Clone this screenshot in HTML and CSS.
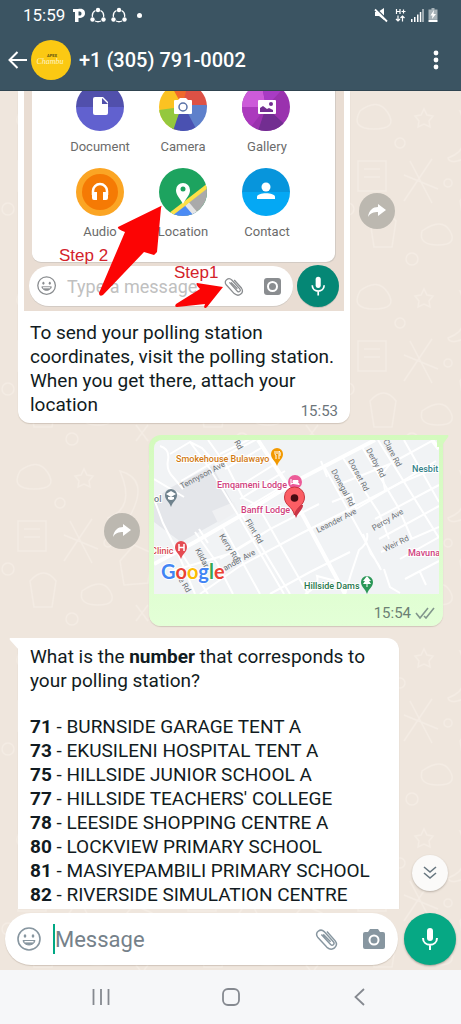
FILE: index.html
```html
<!DOCTYPE html>
<html lang="en">
<head>
    <meta charset="UTF-8">
    <meta name="viewport" content="width=device-width, initial-scale=1.0">
    <title>+1 (305) 791-0002</title>
    <link rel="stylesheet" href="styles.css">
</head>
<body>
    <header class="header">
        <div class="status">
            <span class="clock">15:59</span>
            <svg width="12" height="15" viewBox="0 0 12 15"><path d="M0 1h5c6-1 7 2 7 4.500S10 10 5.500 10v4H2V4H0zM5.500 3.500v4c2.500.5 3-.7 3-2s-.5-2.500-3-2z" fill="#fff" fill-rule="evenodd"/></svg>
            <svg width="16" height="16" viewBox="0 0 16 16"><use href="#share-ring"/></svg>
            <svg width="16" height="16" viewBox="0 0 16 16">
                <g id="share-ring"><path d="M5.500 3.500A6 6 0 0 0 2.500 10M10.500 3.500A6 6 0 0 1 13.500 10M5 14q3 1.500 6 0" fill="none" stroke="#fff" stroke-width="1.300"/><circle cx="8" cy="3" r="2.200" fill="#fff"/><circle cx="2.500" cy="12.500" r="2.200" fill="#fff"/><circle cx="13.500" cy="12.500" r="2.200" fill="#fff"/></g>
            </svg>
            <span class="dot"></span>
            <svg class="status-right" width="64" height="16" viewBox="374 6 64 16" fill="#fff">
                <path d="M375 11h3l6-4v12l-5-4h-4z"/>
                <path d="M376 7.500l12 12" stroke="#3b5462" stroke-width="1.500"/>
                <path d="M375 8.500l12 12" stroke="#fff" stroke-width="1.800"/>
                <path d="M396.500 8v5M400 8v5M396.500 10.500h3.500M401.500 10.500h4M403.500 8.500v4M398 14.500v5.500M396 18l2 2 2-2M402.500 20.500v-5M400.500 17l2-2 2 2" fill="none" stroke="#fff" stroke-width="1.200"/>
                <path d="M411 18h1.500v3H411zM414 16h1.500v5H414zM417 13.500h1.500V21H417zM419.800 11h1.500v10h-1.500zM422.500 8h1v13h-1z"/>
                <path d="M431.500 7h3v1.500h3V18h-9V8.500h3z" opacity=".55"/><path d="M428.500 18.500h9V21h-9z"/>
                <path d="M434 9l-3.500 5.500h2L432 18l4-5h-2.500z"/>
            </svg>
        </div>
        <div class="appbar">
            <button class="icon-btn" aria-label="Back">
                <svg width="20" height="20" viewBox="0 0 20 20"><path d="M19 10H2M9.500 2L1.500 10l8 8" fill="none" stroke="#fff" stroke-width="2"/></svg>
            </button>
            <svg class="avatar" viewBox="0 0 40 40">
                <circle cx="20" cy="20" r="20" fill="#fbc913"/>
                <text x="21" y="17" font-size="4" font-weight="700" text-anchor="middle" fill="#5d5211">APEX</text>
                <text x="19" y="24" font-size="8" font-style="italic" text-anchor="middle" font-family="Liberation Serif, serif" fill="#fff4c9">Chambu</text>
            </svg>
            <h1 class="title">+1 (305) 791-0002</h1>
            <button class="icon-btn more" aria-label="More options">
                <svg width="6" height="20" viewBox="0 0 6 20" fill="#fff"><circle cx="3" cy="3" r="2.400"/><circle cx="3" cy="10" r="2.400"/><circle cx="3" cy="17" r="2.400"/></svg>
            </button>
        </div>
    </header>

    <div class="screen">
        <main class="chat">
            <div class="row">
                <article class="bubble bubble-photo">
                    <svg class="photo" viewBox="24 91 320 220">
                        <defs>
                            <clipPath id="clip-doc"><circle cx="100" cy="107" r="24"/></clipPath>
                            <clipPath id="clip-cam"><circle cx="183" cy="107" r="24"/></clipPath>
                            <clipPath id="clip-gal"><circle cx="266" cy="107" r="24"/></clipPath>
                            <clipPath id="clip-loc"><circle cx="183" cy="192" r="24"/></clipPath>
                            <clipPath id="clip-con"><circle cx="266" cy="192" r="24"/></clipPath>
                        </defs>
                        <rect x="24" y="91" width="320" height="220" fill="#e9ddd3"/>
                        <rect x="32" y="71" width="304" height="192" rx="9" fill="#d3cbc4"/>
                        <rect x="32" y="71" width="303" height="191" rx="9" fill="#fff"/>

                        <g clip-path="url(#clip-doc)"><path d="M76 83h48v24H76z" fill="#5150ac"/><path d="M76 107h48v24H76z" fill="#6161cf"/></g>
                        <path d="M95 97h8l5 5v11q0 2-2 2H95q-2 0-2-2V99q0-2 2-2z" fill="#fff"/><path d="M102 98v6h6z" fill="#5150ac"/>

                        <g clip-path="url(#clip-cam)">
                            <path d="M150 80h33v50h-33z" fill="#fbc222"/>
                            <path d="M183 107L168 80v-10h26z" fill="#f0692c"/><path d="M183 104l8-34h25v37h-33z" fill="#dd5145"/>
                            <path d="M180 105h37v36h-37z" fill="#5e80cb"/><path d="M183 104l18 34h-33z" fill="#4a51b1"/><path d="M181 107l-9 27-20 3v-26z" fill="#94c83e"/>
                        </g>
                        <path d="M175 100h3l2-2h6l2 2h3q1 0 1 1v12q0 1-1 1h-16q-1 0-1-1v-12q0-1 1-1z" fill="#fff"/><circle cx="183" cy="107" r="4" fill="none" stroke="#5972a8" stroke-width="1.500"/>

                        <g clip-path="url(#clip-gal)">
                            <path d="M240 80h52v54h-52z" fill="#9a32ae"/><path d="M240 80h21l5 27h-26z" fill="#cc5bd9"/><path d="M261 80h30l-25 27z" fill="#a83bc4"/><path d="M266 107l26 24h-34z" fill="#722e91"/><path d="M240 107h26l-18 24z" fill="#ab39bd"/>
                        </g>
                        <rect x="258" y="100" width="18" height="14" rx="1" fill="#fff"/><path d="M260 112v-4l3-2 4 3 2-1 4 2v2z" fill="#722e91"/><circle cx="271" cy="104" r="2" fill="#722e91"/>

                        <circle cx="100" cy="192" r="24" fill="#fba524"/><circle cx="100" cy="192" r="18" fill="#f57a04"/>
                        <path d="M93 195v-4a7 7 0 0 1 14 0v4" fill="none" stroke="#fff" stroke-width="2.500"/><path d="M92 192h5v8h-3q-2 0-2-2zM108 192h-5v8h3q2 0 2-2z" fill="#fff"/>

                        <g clip-path="url(#clip-loc)">
                            <path d="M159 168h48v48h-48z" fill="#1da35f"/><path d="M166 219l44-33v33z" fill="#aaa"/><path d="M169 218l19-14 12 14z" fill="#4b8bf4"/><path d="M187 204l12 14" stroke="#e4e4e4" stroke-width="5"/><path d="M166 218l44-34" stroke="#fde047" stroke-width="4"/>
                        </g>
                        <path d="M183 204c-4-7-7-9-7-14a7 7 0 0 1 14 0c0 5-3 7-7 14z" fill="#fff"/><circle cx="183" cy="189" r="2.500" fill="#1da35f"/>

                        <g clip-path="url(#clip-con)"><path d="M242 168h48v24h-48z" fill="#0795dc"/><path d="M242 192h48v24h-48z" fill="#04a8f4"/></g>
                        <circle cx="266" cy="187" r="4.500" fill="#fff"/><path d="M257 199v-2c0-5 18-5 18 0v2z" fill="#fff"/>

                        <g class="photo-label">
                            <text x="100" y="151">Document</text><text x="183" y="151">Camera</text><text x="267" y="151">Gallery</text>
                            <text x="100" y="236">Audio</text><text x="183" y="236">Location</text><text x="267" y="236">Contact</text>
                        </g>

                        <rect x="29" y="267" width="264" height="40" rx="20" fill="#d3cbc4"/><rect x="29" y="266" width="264" height="40" rx="20" fill="#fff"/>
                        <g transform="translate(37 276)"><use href="#smiley" fill="#8a8d90" stroke="#8a8d90" transform="scale(.8)"/></g>
                        <text x="67" y="293" font-size="18" fill="#c0c0c0">Type a message</text>
                        <g transform="translate(223 276)"><use href="#clip" fill="none" stroke="#8a8d90" transform="scale(.8)"/></g>
                        <rect x="264" y="278" width="17" height="17" rx="3" fill="#8a8d90"/><circle cx="272.500" cy="286.500" r="4.500" fill="none" stroke="#fff" stroke-width="2"/>
                        <circle cx="318" cy="287" r="21" fill="#c8c0ba"/><circle cx="318" cy="286" r="21" fill="#058775"/>
                        <g transform="translate(308 276)"><use href="#mic" transform="scale(.85)"/></g>

                        <path d="M161 206l-43 21q-1 2 7 5l-26 61q0 4 4 2l41-43 10 3 3-3 4-44q1-3 0-2z" fill="#fc0404"/>
                        <path d="M223 287l-26-4q-2 1 3 6l-24 15q-2 3 1 3l28-3-1 3q1 2 3 0z" fill="#fc0404"/>
                        <g class="photo-step"><text x="59" y="261">Step 2</text><text x="174" y="278">Step1</text></g>
                    </svg>
                    <p class="text caption">To send your polling station coordinates, visit the polling station. When you get there, attach your location <time class="time">15:53</time></p>
                </article>
                <button class="forward forward-top" aria-label="Forward">
                    <svg width="20" height="16" viewBox="0 0 20 16"><path id="forward" d="M1 14C2 7 6 4 11 4V1l8 6-8 6v-4C7 9 3 10 1 14z" fill="#fff"/></svg>
                </button>
            </div>

            <div class="row row-out">
                <button class="forward" aria-label="Forward">
                    <svg width="20" height="16" viewBox="0 0 20 16"><use href="#forward"/></svg>
                </button>
                <article class="bubble bubble-out">
                    <svg class="map" viewBox="154 441 285 154">
                        <rect x="154" y="441" width="285" height="154" fill="#f1f3f5"/>
                        <path d="M168 490l44-23 25 45-56 31-27-20v-22z" fill="#e4e6ea"/>
                        <path d="M212 512l22-9 4 9-20 12z" fill="#eff0f2"/>
                        <g class="street">
                            <path d="M160 447q10 3 8 14-2 10 5 17l10 12M154 480l30 18M170 455l20-12 20 27 28 46 46 79M154 500l9 24 14 28 18 43"/>
                            <path d="M181 482l36-21 40-21M190 443l12 6 18 20M208 441l20 28 15 30 16 8M220 455l30-15M225 470l38-22M235 490l40-25M240 500l45-28M248 508l40-24"/>
                            <path d="M195 533l22 31 16 31M222 526l38 69M242 516l48 79M258 507l50 88M178 549l30 46M199 530l9 14M172 572l60-18 40-25 47-24M200 595l40-28 60-32 50-25 50-26 39-16M270 595l40-22 40-20M220 560l50-30"/>
                            <path d="M325 469l56 102M343 459l36 55 10 26M362 448l36 60 14 32M378 441l61 98M404 441l35 62M321 462l6 16M340 485l50-20 49-27M356 510l80-48M375 520l64-34M381 571q-2-6-10-16l-8-20M381 553l58-25M379 540l60-33M400 560l39-22"/>
                            <path d="M367 534q2 10-8 17-4 12-8 24l-6 20M384 570l6 18 10 6M405 580l34-18M420 573l6 13M305 595q15-8 12-18l30 8M356 510l-4-15-20 8M390 465l-8 10 3 16"/>
                        </g>
                        <g class="road"><path d="M154 565l41-22 45-26 60-37 75-39"/><path d="M258 441l30 46 12 24 45 84M432 441l7 9"/></g>
                        <g class="map-street-name">
                            <text transform="translate(182 490) rotate(-28)">Tennyson Ave</text>
                            <text transform="translate(231 438) rotate(60)">y Rd</text>
                            <text transform="translate(245 522) rotate(60)">Flint Rd</text>
                            <text transform="translate(219 537) rotate(58)">Kerry Rd</text>
                            <text transform="translate(195 551) rotate(62)">Kildare</text>
                            <text transform="translate(225 572) rotate(-29)">ander Ave</text>
                            <text transform="translate(318 534) rotate(-27)">Leander Ave</text>
                            <text transform="translate(374 532) rotate(-31)">Percy Ave</text>
                            <text transform="translate(385 553) rotate(-26)">Weir Rd</text>
                            <text transform="translate(331 472) rotate(62)">Donegal Rd</text>
                            <text transform="translate(348 462) rotate(62)">Dorset Rd</text>
                            <text transform="translate(366 451) rotate(62)">Derby Rd</text>
                            <text transform="translate(383 442) rotate(62)">Clare Rd</text>
                            <text transform="translate(176 577) rotate(58)">ue Rd</text>
                        </g>
                        <g class="map-place">
                            <text x="176" y="463" fill="#d17a13">Smokehouse Bulawayo</text>
                            <text x="217" y="489" fill="#d0407d">Emqameni Lodge</text>
                            <text x="241" y="514" fill="#d0407d">Banff Lodge</text>
                            <text x="412" y="473" fill="#337f88">Nesbit</text>
                            <text x="408" y="557" fill="#d0407d">Mavuna</text>
                            <text x="304" y="590" fill="#26774b">Hillside Dams</text>
                            <text x="151" y="555" fill="#d84a50">Clinic</text>
                            <text x="149" y="503" fill="#71808a">ool</text>
                        </g>
                        <g fill="#f29900"><path id="pin" d="M277 467c-2-6-6-7-6-12a6 6 0 0 1 12 0c0 5-4 6-6 12z"/></g>
                        <path d="M275 452v3q0 1 1 1v4M277 452v3M279 460v-8q2 1 1 5" fill="none" stroke="#fff"/>
                        <use href="#pin" x="-106" y="41" fill="#6f828d"/><path d="M166 495l5-3 5 3-5 3zM168 498v2q3 2 6 0v-2z" fill="#fff"/>
                        <use href="#pin" x="-96" y="93" fill="#e54b52"/><path d="M179 545v7M184 545v7M179 548.500h5" stroke="#fff" stroke-width="1.500"/>
                        <use href="#pin" x="90" y="128" fill="#2b9757"/><path d="M367 577l4 5h-2l2 3h-8l2-3h-2zM366.500 585h1v3h-1z" fill="#fff"/>
                        <circle cx="295" cy="483" r="7" fill="#ec5b98"/><path d="M291 480v6M291 484.500h8v1.500M293 481.500h5v2h-5z" fill="#fff" stroke="#fff"/>
                        <path d="M296 519c-2-7-5-8-5-13h12c0 5-5 7-7 13z" fill="#c93447"/>
                        <path d="M294.500 516c-2-9-10-9-10-18a10 10 0 0 1 20 0c0 9-8 9-10 18z" fill="#fb5e64" stroke="#c73540"/><circle cx="294.500" cy="499" r="3.800" fill="#470c12"/>
                        <text class="google" x="161" y="580"><tspan fill="#4285f4">G</tspan><tspan fill="#ea4335">o</tspan><tspan fill="#fbbc05">o</tspan><tspan fill="#4285f4">g</tspan><tspan fill="#34a853">l</tspan><tspan fill="#ea4335">e</tspan></text>
                    </svg>
                    <div class="meta">
                        <time>15:54</time>
                        <svg width="20" height="12" viewBox="0 0 20 12"><path d="M1 6l4 5 8-10M9 9l2 2 8-10" fill="none" stroke="#82968c" stroke-width="1.600"/></svg>
                    </div>
                    <svg class="tail tail-right" width="12" height="12" viewBox="0 0 12 12"><path d="M0 0h11q1 1 0 2L6 9v3H0z" fill="#d3fabd"/></svg>
                </article>
            </div>

            <div class="row row-last">
                <article class="bubble bubble-list">
                    <svg class="tail tail-left" width="10" height="12" viewBox="0 0 10 12"><path d="M10 0H1Q0 1 1 2l9 10z" fill="#fff"/></svg>
                    <p class="text">What is the <b>number</b> that corresponds to your polling station?</p>
                    <ul class="text stations">
                        <li><b>71</b> - BURNSIDE GARAGE TENT A</li>
                        <li><b>73</b> - EKUSILENI HOSPITAL TENT A</li>
                        <li><b>75</b> - HILLSIDE JUNIOR SCHOOL A</li>
                        <li><b>77</b> - HILLSIDE TEACHERS' COLLEGE</li>
                        <li><b>78</b> - LEESIDE SHOPPING CENTRE A</li>
                        <li><b>80</b> - LOCKVIEW PRIMARY SCHOOL</li>
                        <li><b>81</b> - MASIYEPAMBILI PRIMARY SCHOOL</li>
                        <li><b>82</b> - RIVERSIDE SIMULATION CENTRE</li>
                    </ul>
                </article>
            </div>
            <button class="scroll-down" aria-label="Scroll to bottom">
                <svg width="14" height="14" viewBox="0 0 14 14"><path d="M1 1l6 5 6-5M1 7l6 5 6-5" fill="none" stroke="#687780" stroke-width="1.600"/></svg>
            </button>
        </main>

        <form class="composer">
            <div class="field">
                <button type="button" class="icon-btn" aria-label="Emoji">
                    <svg width="24" height="24" viewBox="0 0 24 24" fill="#8796a0" stroke="#8796a0">
                        <g id="smiley"><circle cx="12" cy="12" r="11" fill="none" stroke-width="1.600"/><ellipse cx="8" cy="9" rx="1.300" ry="1.800" stroke="none"/><ellipse cx="16" cy="9" rx="1.300" ry="1.800" stroke="none"/><path d="M6 13.500h12c-1 6-11 6-12 0z" stroke-width="1"/><path d="M7.500 14.700h9" stroke="#fff" stroke-width="1.400"/></g>
                    </svg>
                </button>
                <span class="caret"></span>
                <input class="message" type="text" placeholder="Message" aria-label="Message">
                <button type="button" class="icon-btn" aria-label="Attach">
                    <svg width="24" height="24" viewBox="0 0 26 26" fill="none" stroke="#8796a0">
                        <path id="clip" d="M8 8l10 11c2 2 5-.5 3-3L11 5C7 1 0 6 4 11l10 11c6 5 13-1 9-7l-9-10M18 16l-8-8" stroke-width="1.600"/>
                    </svg>
                </button>
                <button type="button" class="icon-btn camera" aria-label="Camera">
                    <svg width="24" height="22" viewBox="0 0 24 22"><path d="M8 1h8l2 3h3q2 0 2 2v13q0 2-2 2H3q-2 0-2-2V6q0-2 2-2h3z" fill="#8796a0"/><circle cx="12" cy="12" r="4.500" fill="none" stroke="#fff" stroke-width="2"/></svg>
                </button>
            </div>
            <button type="button" class="mic" aria-label="Voice message">
                <svg width="24" height="24" viewBox="0 0 24 24">
                    <g id="mic"><rect x="9" y="1" width="6" height="13" rx="3" fill="#fff"/><path d="M5 11c0 9 14 9 14 0M12 18v5" fill="none" stroke="#fff" stroke-width="2"/></g>
                </svg>
            </button>
        </form>
    </div>

    <nav class="navbar">
        <button class="icon-btn" aria-label="Recents"><svg width="18" height="18" viewBox="0 0 18 18"><path d="M1.500 1v16M9 1v16M16.500 1v16" stroke="#858990" stroke-width="1.800"/></svg></button>
        <button class="icon-btn" aria-label="Home"><svg width="18" height="18" viewBox="0 0 18 18"><rect x="1" y="1" width="16" height="16" rx="5" fill="none" stroke="#858990" stroke-width="1.800"/></svg></button>
        <button class="icon-btn" aria-label="Back"><svg width="18" height="18" viewBox="0 0 18 18"><path d="M13 1L4.500 9l8.500 8" fill="none" stroke="#858990" stroke-width="1.800"/></svg></button>
    </nav>
</body>
</html>
```
FILE: styles.css
```css
* {
    box-sizing: border-box;
}
body {
    margin: 0;
    height: 100vh;
    display: flex;
    flex-direction: column;
    font-family: Roboto, "Liberation Sans", sans-serif;
    color: #111b21;
    overflow: hidden;
}
button {
    border: none;
    padding: 0;
    background: none;
    cursor: pointer;
}
svg {
    display: block;
    flex-shrink: 0;
}
.icon-btn {
    display: flex;
    align-items: center;
    justify-content: center;
}

/* header */
.header {
    background: #3b5462;
    color: #fff;
    border-bottom: 1px solid #2f4450;
}
.status {
    display: flex;
    align-items: center;
    height: 30px;
    padding: 0 23px;
    gap: 5px;
}
.clock {
    font-size: 17px;
    margin-right: 3px;
}
.dot {
    width: 5px;
    height: 5px;
    border-radius: 50%;
    background: #fff;
    margin-left: 5px;
}
.status-right {
    margin-left: auto;
}
.appbar {
    display: flex;
    align-items: center;
    height: 60px;
    padding: 0 22px 0 8px;
}
.avatar {
    width: 40px;
    height: 40px;
    margin: 0 8px 0 3px;
}
.title {
    flex: 1;
    margin: 0;
    font-size: 20px;
    font-weight: 500;
}

/* chat */
.screen {
    flex: 1;
    min-height: 0;
    display: flex;
    flex-direction: column;
    background: #efe6dd url("data:image/svg+xml,%3Csvg xmlns='http://www.w3.org/2000/svg' width='170' height='180' fill='none' stroke='%23f4ece4' stroke-width='1.500'%3E%3Cpath d='M20 20q18-14 28 2t-14 16-14-18zM84 18l3 6 6 1-4 5 1 6-6-3-6 3 1-6-4-5 6-1zM120 20q30 8 10 45-20 10-22 2 28-10 12-47zM18 70h28v30H18zM24 78h16M24 86h16M70 70l22 42M92 68l-28 42M64 84l34 14M120 110l14-16 18 8-4 30-24 2zM30 130q14-16 26 0l-4 26H34zM82 140q20-14 28 0t-12 14-16-14zM136 154l12 16M148 154l-12 16'/%3E%3Ccircle cx='60' cy='52' r='5'/%3E%3Ccircle cx='156' cy='16' r='7'/%3E%3Ccircle cx='8' cy='118' r='6'/%3E%3Ccircle cx='108' cy='92' r='4'/%3E%3Ccircle cx='72' cy='168' r='6'/%3E%3Ccircle cx='154' cy='78' r='4'/%3E%3C/svg%3E");
}
.chat {
    position: relative;
    flex: 1;
    min-height: 0;
    display: flex;
    flex-direction: column;
    gap: 12px;
    padding: 0 18px;
    overflow: hidden;
}
.row {
    display: flex;
    align-items: center;
    gap: 9px;
}
.row-out {
    justify-content: flex-end;
}
.row-last {
    flex: 1;
    align-items: stretch;
}
.bubble {
    position: relative;
    background: #fff;
    border-radius: 12px;
    box-shadow: 0 1px 1px rgba(90, 70, 50, 0.2);
}
.bubble-photo {
    flex: 0 1 332px;
    padding: 0 6px 6px;
    border-radius: 0 0 12px 12px;
}
.photo,
.map {
    width: 100%;
    height: auto;
}
.photo-label {
    font-size: 13px;
    fill: #6b6b6b;
    text-anchor: middle;
}
.photo-step {
    font-family: "Liberation Sans", Arial, sans-serif;
    font-size: 17px;
    fill: #d3222a;
}
.text {
    margin: 0;
    font-size: 19px;
    line-height: 24px;
}
.caption {
    padding: 10px 0 0 6px;
}
.time {
    float: right;
    margin-right: 6px;
    font-size: 15px;
    line-height: 36px;
    height: 24px;
    color: #6c757b;
}
.forward {
    display: flex;
    align-items: center;
    justify-content: center;
    flex-shrink: 0;
    width: 36px;
    height: 36px;
    border-radius: 50%;
    background: #bcb8b0;
}
.forward-top {
    align-self: flex-start;
    margin-top: 102px;
}
.bubble-out {
    flex: 0 1 294px;
    padding: 5px 4px 0 5px;
    border-radius: 12px 0 12px 12px;
    background: linear-gradient(#d3fabd, #e3ffd7);
}
.map {
    border-radius: 8px 0 0 0;
}
.street {
    fill: none;
    stroke: #fff;
    stroke-width: 2px;
}
.road {
    fill: none;
    stroke: #fff;
    stroke-width: 4px;
}
.map-street-name {
    font-size: 8px;
    fill: #6c7175;
}
.map-place {
    font-size: 9px;
    font-weight: 500;
    stroke: #fff;
    stroke-width: 2px;
    paint-order: stroke;
}
.google {
    font-family: Lato, sans-serif;
    font-size: 20px;
    font-weight: 700;
    stroke: #fff;
    stroke-width: 2px;
    paint-order: stroke;
}
.meta {
    display: flex;
    align-items: center;
    justify-content: flex-end;
    gap: 4px;
    height: 32px;
    padding: 6px 4px 0 0;
    font-size: 15px;
    color: #6c7f74;
}
.tail {
    position: absolute;
    top: 0;
}
.tail-right {
    right: -6px;
}
.tail-left {
    left: -9px;
}
.bubble-list {
    flex: 0 1 381px;
    padding: 7px 12px;
    border-radius: 0 12px 0 0;
}
.stations {
    list-style: none;
    margin-top: 22px;
    padding: 0;
}
.stations li {
    white-space: nowrap;
}
.scroll-down {
    position: absolute;
    right: 13px;
    bottom: 18px;
    width: 36px;
    height: 36px;
    display: flex;
    align-items: center;
    justify-content: center;
    border-radius: 50%;
    background: #fbfaf9;
    box-shadow: 0 1px 2px rgba(60, 50, 40, 0.3);
}

/* composer */
.composer {
    display: flex;
    align-items: center;
    gap: 6px;
    padding: 4px 5px 5px;
}
.field {
    flex: 1;
    min-width: 0;
    display: flex;
    align-items: center;
    height: 52px;
    padding: 0 12px;
    border-radius: 26px;
    background: #fff;
    box-shadow: 0 1px 1px rgba(90, 70, 50, 0.2);
}
.caret {
    width: 2px;
    height: 30px;
    margin-left: 12px;
    background: #00a884;
}
.message {
    flex: 1;
    min-width: 0;
    border: none;
    outline: none;
    padding: 0;
    background: none;
    font-family: inherit;
    font-size: 22px;
}
.message::placeholder {
    color: #75818a;
    opacity: 1;
}
.camera {
    margin-left: 24px;
}
.mic {
    display: flex;
    align-items: center;
    justify-content: center;
    width: 52px;
    height: 52px;
    border-radius: 50%;
    background: #06a884;
    box-shadow: 0 1px 2px rgba(60, 50, 40, 0.4);
}

/* system buttons */
.navbar {
    display: flex;
    align-items: center;
    justify-content: space-between;
    height: 54px;
    padding: 0 92px;
    background: #f6f7f9;
}
```
